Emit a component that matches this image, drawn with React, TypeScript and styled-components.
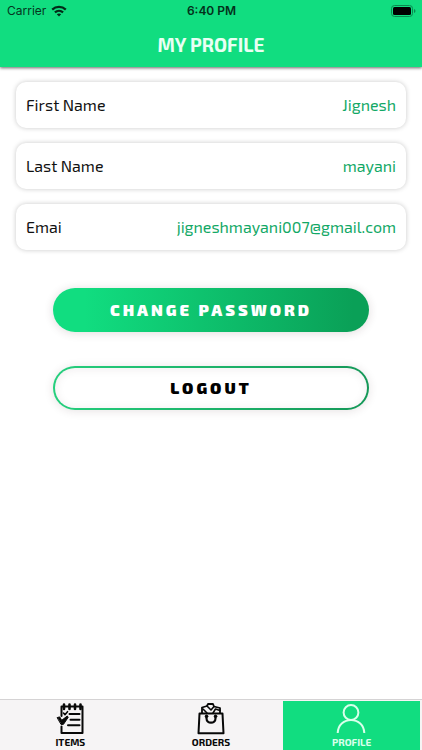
import React from "react";
import styled, { createGlobalStyle, css } from "styled-components";

const GlobalStyle = createGlobalStyle`
  *, *::before, *::after { box-sizing: border-box; }
  body {
    margin: 0;
    background: #fff;
    color: #000;
    font-family: "Exo 2", "Noto Sans", sans-serif;
  }
`;

const Screen = styled.div`
  display: flex;
  flex-direction: column;
  min-height: 100vh;
`;

const Header = styled.header`
  background: #11dd80;
  box-shadow: 0 1px 3px rgba(0, 0, 0, 0.6);
`;

const StatusBar = styled.div`
  display: grid;
  grid-template-columns: 1fr auto 1fr;
  align-items: center;
  height: 22px;
  padding: 0 6px 0 7px;
  color: #05351e;
  font: 400 12px/22px Inter, sans-serif;
`;

const Carrier = styled.span`
  display: flex;
  align-items: center;
  gap: 5px;
`;

const Clock = styled.time`
  color: #04311b;
  font-weight: 600;
`;

const Battery = styled.svg`
  justify-self: end;
`;

const Title = styled.h1`
  margin: 0;
  color: #e9fff4;
  font-size: 19px;
  font-weight: 700;
  line-height: 45px;
  text-align: center;
`;

const Main = styled.main`
  flex: 1;
  padding: 15px 16px;
`;

const Details = styled.dl`
  display: flex;
  flex-direction: column;
  gap: 15px;
  margin: 0;
`;

const DetailRow = styled.div`
  display: flex;
  align-items: center;
  justify-content: space-between;
  height: 46px;
  padding: 0 10px 2px;
  border-radius: 10px;
  background: #fff;
  box-shadow: 0 0 5px rgba(0, 0, 0, 0.22);
  font-size: 16px;
`;

const Label = styled.dt`
  color: #111;
`;

const Value = styled.dd`
  margin: 0;
  color: #12a866;
`;

const Actions = styled.div`
  display: flex;
  flex-direction: column;
  align-items: center;
  gap: 34px;
  padding-top: 38px;
`;

const ActionButton = styled.button<{ $outlined?: boolean }>`
  width: 81%;
  height: 44px;
  padding: 0 0 2px;
  border: 2px solid transparent;
  border-radius: 22px;
  background: linear-gradient(90deg, #11dd80 10%, #0aa057 95%) border-box;
  box-shadow: 0 1px 10px rgba(60, 30, 40, 0.16);
  color: #fff;
  font-family: inherit;
  font-size: 16px;
  font-weight: 900;
  letter-spacing: 3px;
  cursor: pointer;

  ${({ $outlined }) =>
    $outlined &&
    css`
      background:
        linear-gradient(#fff, #fff) padding-box,
        linear-gradient(90deg, #25cf7d, #159858) border-box;
      box-shadow:
        0 1px 10px rgba(60, 30, 40, 0.13),
        inset 0 1px 10px rgba(60, 30, 40, 0.08);
      color: #000;
    `}
`;

const TabBar = styled.nav`
  display: grid;
  grid-template-columns: repeat(3, 1fr);
  height: 51px;
  border-top: 1px solid #d5d3d4;
  background: #f6f4f5;
`;

const Tab = styled.a<{ $active?: boolean }>`
  display: flex;
  flex-direction: column;
  align-items: center;
  justify-content: flex-end;
  margin: 1px 2px 0;
  padding-bottom: 1px;
  background: ${({ $active }) => ($active ? "#11dd80" : "transparent")};
  color: ${({ $active }) => ($active ? "#d9ffeb" : "#080808")};
  font-size: 10px;
  font-weight: 700;
  line-height: 14px;
  text-decoration: none;
`;

const TabIcon = styled.svg`
  width: 32px;
  height: 34px;
  fill: none;
  stroke: currentColor;
  stroke-width: 2;
  stroke-linecap: round;
  stroke-linejoin: round;
`;

const details = [
  { label: "First Name", value: "Jignesh" },
  { label: "Last Name", value: "mayani" },
  { label: "Emai", value: "jigneshmayani007@gmail.com" },
];

const WifiIcon = () => (
  <svg width="16" height="12" viewBox="0 0 16 12" fill="none" stroke="#032b18" strokeWidth="2.2" aria-label="Wi-Fi">
    <path d="M1.2 4.6C5 .9 11 .9 14.8 4.6" />
    <path d="M3.9 7.4c2.4-2.2 5.8-2.2 8.2 0" />
    <path d="M5.8 9.3c1.2-1.1 3.2-1.1 4.4 0L8 11.6z" fill="#032b18" stroke="none" />
  </svg>
);

const BatteryIcon = () => (
  <Battery width="25" height="12" viewBox="0 0 25 12" aria-label="Battery full">
    <rect x=".5" y=".5" width="21" height="11" rx="3" fill="none" stroke="#0b8950" />
    <rect x="2" y="2" width="18" height="8" rx="1.5" fill="#000" />
    <path d="M23 4v4q1.5-.6 1.5-2T23 4z" fill="#0b8950" />
  </Battery>
);

const ItemsIcon = () => (
  <TabIcon viewBox="0 0 32 34" aria-hidden="true">
    <path d="M7.5 15V5.5h21V32h-21v-6.5" />
    <path d="M10 3.5v4.5M15.5 3.5v4.5M21 3.5v4.5M26.5 3.5v4.5" strokeWidth="2.6" />
    <path d="M15.5 13h10M16.5 18.7h9M14 24.3h11.5" />
    <path d="m9.5 12 1.5 1.7 2.5-3" strokeWidth="1.6" />
    <path d="m3.5 16.5 2.2-.6 2 3.4 5.6-4.3.9 1.3-4.7 7-2 .2z" fill="currentColor" strokeWidth="1" />
  </TabIcon>
);

const OrdersIcon = () => (
  <TabIcon viewBox="0 0 32 34" aria-hidden="true">
    <path d="M4.5 12.5h23l1 19.8h-25z" />
    <path d="M7 12V6.5L12 5l1-2h5l1 2.5 6 1.5v5" strokeWidth="1.8" />
    <path d="m8 8 4 4M12 5l4 4 3-3.5M18 12l2.5-4 4.5 1.5" strokeWidth="1.6" />
    <path d="M11.5 15.5v1.7c0 6 9 6 9 0v-1.7" strokeWidth="2.2" />
    <circle cx="11.5" cy="15.3" r="1.3" fill="currentColor" strokeWidth="1" />
    <circle cx="20.5" cy="15.3" r="1.3" fill="currentColor" strokeWidth="1" />
  </TabIcon>
);

const ProfileIcon = () => (
  <TabIcon viewBox="0 0 32 34" aria-hidden="true">
    <circle cx="15" cy="11.5" r="7.4" />
    <path d="M1.7 32c.6-17.5 26-17.5 26.6 0" strokeLinecap="butt" />
  </TabIcon>
);

export default function App() {
  return (
    <>
      <GlobalStyle />
      <Screen>
        <Header>
          <StatusBar>
            <Carrier>
              Carrier <WifiIcon />
            </Carrier>
            <Clock>6:40 PM</Clock>
            <BatteryIcon />
          </StatusBar>
          <Title>MY PROFILE</Title>
        </Header>
        <Main>
          <Details>
            {details.map(({ label, value }) => (
              <DetailRow key={label}>
                <Label>{label}</Label>
                <Value>{value}</Value>
              </DetailRow>
            ))}
          </Details>
          <Actions>
            <ActionButton type="button">CHANGE PASSWORD</ActionButton>
            <ActionButton type="button" $outlined>
              LOGOUT
            </ActionButton>
          </Actions>
        </Main>
        <TabBar aria-label="Main">
          <Tab href="#items">
            <ItemsIcon />
            ITEMS
          </Tab>
          <Tab href="#orders">
            <OrdersIcon />
            ORDERS
          </Tab>
          <Tab href="#profile" $active aria-current="page">
            <ProfileIcon />
            PROFILE
          </Tab>
        </TabBar>
      </Screen>
    </>
  );
}
